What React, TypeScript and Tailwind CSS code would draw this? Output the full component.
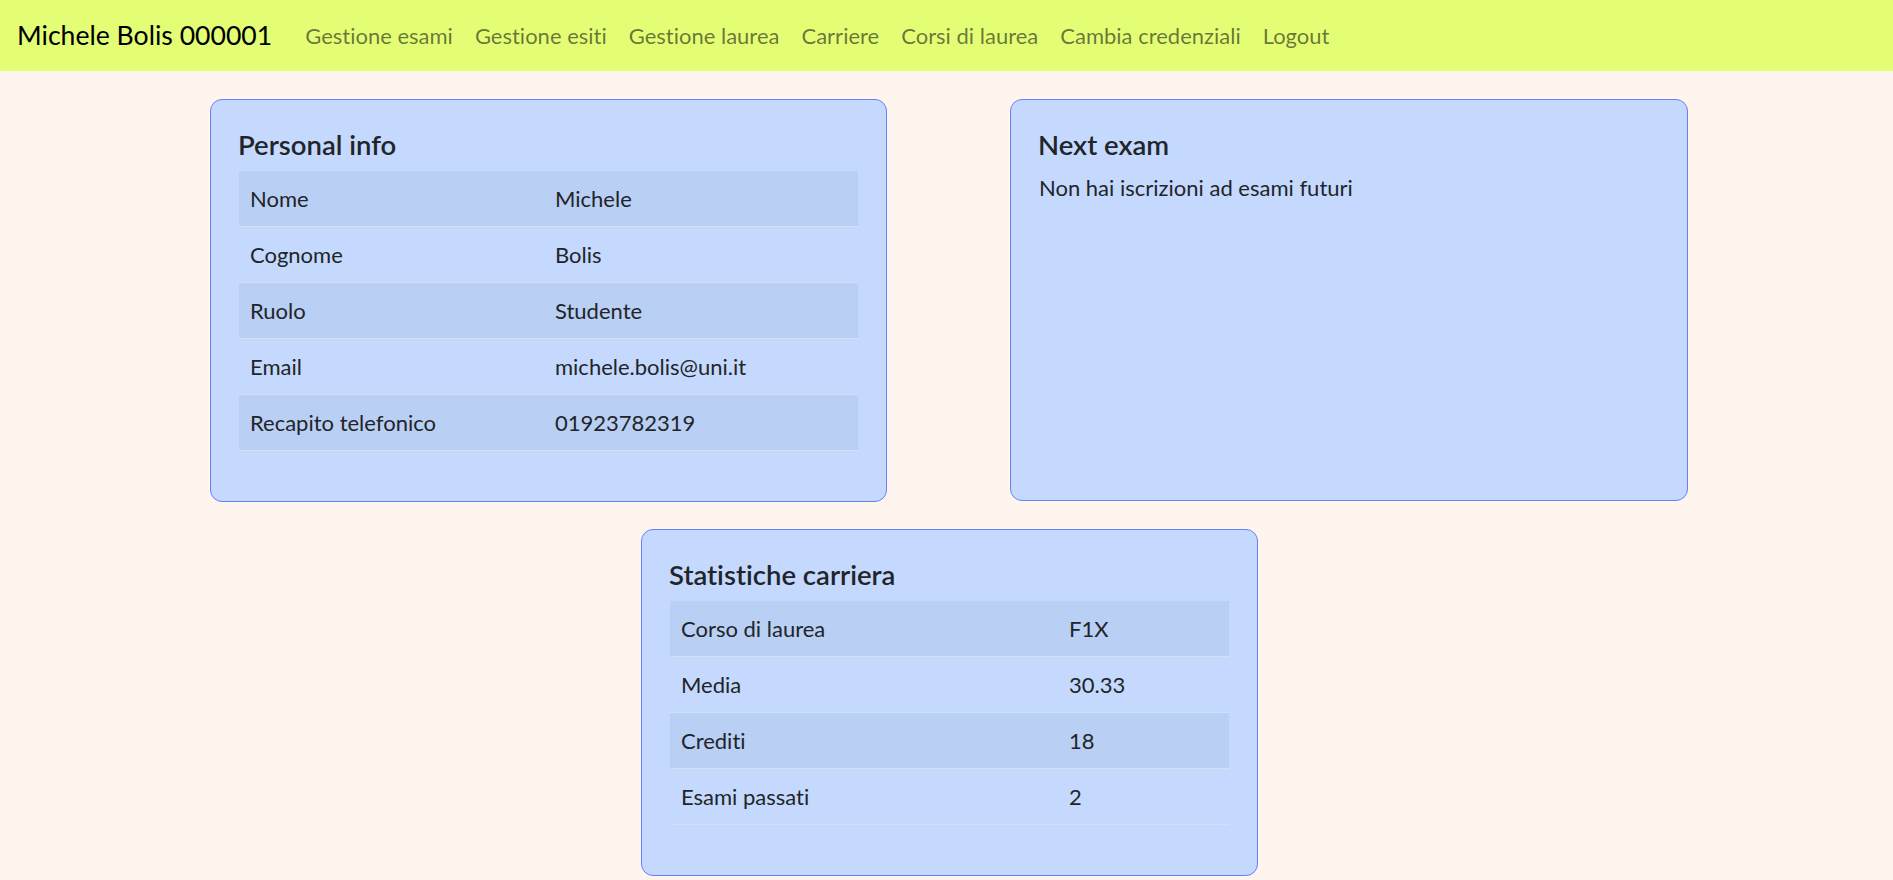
import React from "react";

const F = { fontFamily: "Lato, 'Noto Sans', 'Liberation Sans', sans-serif" };

function Row({ k, v, odd, w }: { k: string; v: string; odd: boolean; w: string }) {
  return (
    <div className={`flex h-[56px] items-center border-b border-[#d4dff2] ${odd ? "bg-[#bacff4]" : ""}`}>
      <div className={`${w} pl-[11px]`}>{k}</div>
      <div className="flex-1 pl-[12px]">{v}</div>
    </div>
  );
}

function Card({ title, w, h, children }: { title: string; w: string; h?: string; children: React.ReactNode }) {
  return (
    <div className={`${w} ${h ?? ""} rounded-[12px] border border-[#6680f7] bg-[#c5d9fe] px-[28px] pt-[28px] pb-[50px]`}>
      <h5 className="mb-[10px] -ml-[1px] text-[27.5px] font-semibold leading-[33px] text-[#212529]">{title}</h5>
      {children}
    </div>
  );
}

export default function App() {
  const links = [
    "Gestione esami",
    "Gestione esiti",
    "Gestione laurea",
    "Carriere",
    "Corsi di laurea",
    "Cambia credenziali",
    "Logout",
  ];
  return (
    <div style={F} className="min-h-[880px] bg-[#fff5ef] text-[22px] text-[#212529] [font-variant-ligatures:none]">
      <nav className="flex h-[71px] items-center bg-[#e3fe75] pl-[17px]">
        <span className="mr-[22px] text-[26.6px] text-black">Michele Bolis 000001</span>
        <div className="flex">
          {links.map((l) => (
            <span key={l} className="px-[11px] text-[22px] text-black/55">
              {l}
            </span>
          ))}
        </div>
      </nav>
      <div className="flex justify-center gap-[123px] pl-[5px] pt-[28px]">
        <Card title="Personal info" w="w-[677px]">
          <div>
            <Row k="Nome" v="Michele" odd w="w-[304px]" />
            <Row k="Cognome" v="Bolis" odd={false} w="w-[304px]" />
            <Row k="Ruolo" v="Studente" odd w="w-[304px]" />
            <Row k="Email" v="michele.bolis@uni.it" odd={false} w="w-[304px]" />
            <Row k="Recapito telefonico" v="01923782319" odd w="w-[304px]" />
          </div>
        </Card>
        <Card title="Next exam" w="w-[678px]" h="h-[402px]">
          <p className="leading-[33px]">Non hai iscrizioni ad esami futuri</p>
        </Card>
      </div>
      <div className="flex justify-center pl-[6px] pt-[27px]">
        <Card title="Statistiche carriera" w="w-[617px]">
          <div>
            <Row k="Corso di laurea" v="F1X" odd w="w-[387px]" />
            <Row k="Media" v="30.33" odd={false} w="w-[387px]" />
            <Row k="Crediti" v="18" odd w="w-[387px]" />
            <Row k="Esami passati" v="2" odd={false} w="w-[387px]" />
          </div>
        </Card>
      </div>
    </div>
  );
}
